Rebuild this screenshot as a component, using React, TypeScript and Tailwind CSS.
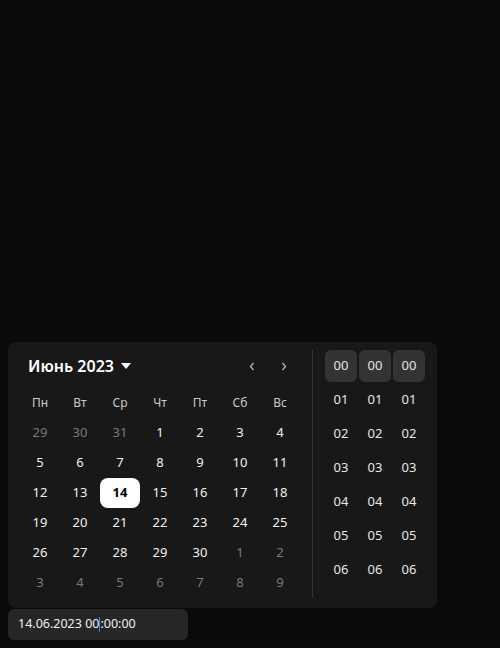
import React from 'react'

const weekDays = ['Пн', 'Вт', 'Ср', 'Чт', 'Пт', 'Сб', 'Вс']

// [day, inMonth]
const days: [number, boolean][] = [
  [29, false], [30, false], [31, false], [1, true], [2, true], [3, true], [4, true],
  [5, true], [6, true], [7, true], [8, true], [9, true], [10, true], [11, true],
  [12, true], [13, true], [14, true], [15, true], [16, true], [17, true], [18, true],
  [19, true], [20, true], [21, true], [22, true], [23, true], [24, true], [25, true],
  [26, true], [27, true], [28, true], [29, true], [30, true], [1, false], [2, false],
  [3, false], [4, false], [5, false], [6, false], [7, false], [8, false], [9, false],
]

const times = ['00', '01', '02', '03', '04', '05', '06']

function TimeColumn() {
  return (
    <div className="flex flex-col gap-[2px]">
      {times.map((t, i) => (
        <div
          key={t}
          className={
            i === 0
              ? 'flex h-8 w-8 items-center justify-center rounded-md bg-[#333333] text-[13px] text-[#e6e6e6]'
              : 'flex h-8 w-8 items-center justify-center rounded-md text-[13px] text-[#e6e6e6]'
          }
        >
          {t}
        </div>
      ))}
    </div>
  )
}

export default function App() {
  return (
    <div
      className="min-h-screen bg-[#0a0a0a] px-2 pt-[342px]"
      style={{ fontFamily: '"Noto Sans", "Open Sans", sans-serif' }}
    >
      <div className="flex w-[429px] rounded-lg bg-[#181818] px-3 pb-[10px] pt-2">
        <div className="w-[280px]">
          <div className="flex h-8 items-center justify-between">
            <button className="ml-2 flex items-center gap-[7px] text-[16px] font-semibold text-white">
              Июнь 2023
              <svg width="10" height="6" viewBox="0 0 10 6">
                <path d="M0 0h10L5 6z" fill="#fff" />
              </svg>
            </button>
            <div className="flex">
              <button className="flex h-8 w-8 items-center justify-center text-[#bbbbbb]">
                <svg width="6" height="9" viewBox="0 0 6 9" fill="none">
                  <path d="M4.5 1L1.5 4.5L4.5 8" stroke="currentColor" strokeWidth="1.2" />
                </svg>
              </button>
              <button className="flex h-8 w-8 items-center justify-center text-[#bbbbbb]">
                <svg width="6" height="9" viewBox="0 0 6 9" fill="none">
                  <path d="M1.5 1L4.5 4.5L1.5 8" stroke="currentColor" strokeWidth="1.2" />
                </svg>
              </button>
            </div>
          </div>

          <div className="mt-[6px] grid grid-cols-7">
            {weekDays.map((d) => (
              <div key={d} className="flex h-[30px] items-center justify-center text-[12px] text-[#cccccc]">
                {d}
              </div>
            ))}
            {days.map(([d, inMonth], i) => {
              const selected = inMonth && d === 14
              let cls = 'flex h-[30px] items-center justify-center rounded-lg text-[13px] '
              if (selected) cls += 'bg-white font-bold text-black'
              else if (inMonth) cls += 'text-[#f0f0f0]'
              else cls += 'text-[#7a7a7a]'
              return (
                <div key={i} className={cls}>
                  {d}
                </div>
              )
            })}
          </div>
        </div>

        <div className="ml-3 w-px bg-[#333333]" />

        <div className="ml-3 flex gap-[2px]">
          <TimeColumn />
          <TimeColumn />
          <TimeColumn />
        </div>
      </div>

      <div className="mt-px flex h-[31px] w-[180px] items-center rounded-md bg-[#262626] px-[10px] text-[12.5px] text-[#f0f0f0]">
        <span>14.06.2023 00</span>
        <span className="h-[15px] w-px bg-[#3b82f6]" />
        <span>:00:00</span>
      </div>
    </div>
  )
}
